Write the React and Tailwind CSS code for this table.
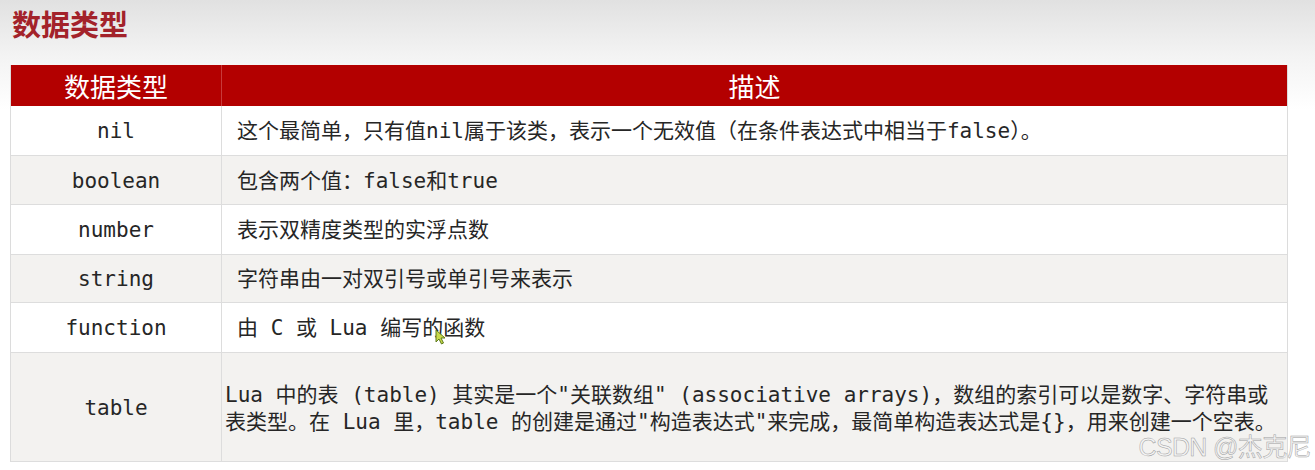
const rows = [
  {
    type: 'nil',
    desc: (
      <>这个最简单，只有值nil属于该类，表示一个无效值（在条件表达式中相当于false）。</>
    ),
    h: 'h-[50px]',
    bg: 'bg-white',
  },
  {
    type: 'boolean',
    desc: <>包含两个值：false和true</>,
    h: 'h-[49px]',
    bg: 'bg-[#f3f2f0]',
  },
  {
    type: 'number',
    desc: <>表示双精度类型的实浮点数</>,
    h: 'h-[50px]',
    bg: 'bg-white',
  },
  {
    type: 'string',
    desc: <>字符串由一对双引号或单引号来表示</>,
    h: 'h-[48px]',
    bg: 'bg-[#f3f2f0]',
  },
  {
    type: 'function',
    desc: <>由 C 或 Lua 编写的函数</>,
    h: 'h-[50px]',
    bg: 'bg-white',
    cursor: true,
  },
]

function Cursor() {
  return (
    <svg
      width="12"
      height="16"
      viewBox="0 0 12 16"
      className="absolute left-[213px] top-[26px]"
    >
      <path d="M1 1 L1 13 L4 10 L6.5 15 L8.5 14 L6 9 L10 9 Z" fill="#c8d94a" stroke="#5c7a1c" strokeWidth="1" />
    </svg>
  )
}

export default function App() {
  const mono = { fontFamily: '"DejaVu Sans Mono", "Noto Sans CJK SC", monospace' }
  return (
    <div
      className="relative w-full h-[470px] overflow-hidden bg-[linear-gradient(to_bottom,#e1e1e1_0px,#f3f3f3_55px,#ffffff_110px)]"
      style={{ fontFamily: '"Noto Sans CJK SC", sans-serif' }}
    >
      <h1 className="absolute left-[12px] top-[1px] text-[29px] font-bold text-[#a3222a] leading-[44px]">
        数据类型
      </h1>

      <div className="pt-[65px] pl-[10px]">
        <div className="w-[1278px] border-l border-r border-[#dcdcdc]">
          {/* 表头 */}
          <div className="grid grid-cols-[211px_1fr] h-[41px] bg-[#b30000] text-white text-[26px] leading-[41px]">
            <div className="text-center border-r border-[#c83a3a]">数据类型</div>
            <div className="text-center">描述</div>
          </div>

          {rows.map((r) => (
            <div
              key={r.type}
              className={`grid grid-cols-[211px_1fr] ${r.h} ${r.bg} border-b border-[#dddddd] text-[21px] text-[#262626]`}
              style={mono}
            >
              <div className="flex items-center justify-center pt-[3px] border-r border-[#dddddd]">{r.type}</div>
              <div className="relative flex items-center pt-[3px] pl-[15px]">
                {r.desc}
                {r.cursor && <Cursor />}
              </div>
            </div>
          ))}

          <div
            className="grid grid-cols-[211px_1fr] h-[109px] bg-[#f3f2f0] border-b border-[#dddddd] text-[21px] text-[#262626]"
            style={mono}
          >
            <div className="flex items-center justify-center pt-[3px] border-r border-[#dddddd]">table</div>
            <div className="flex flex-col justify-center pt-[3px] pl-[3px] leading-[27px]">
              <div>Lua 中的表 (table) 其实是一个"关联数组" (associative arrays)，数组的索引可以是数字、字符串或</div>
              <div>表类型。在 Lua 里，table 的创建是通过"构造表达式"来完成，最简单构造表达式是{'{}'}，用来创建一个空表。</div>
            </div>
          </div>
        </div>
      </div>

      <div
        className="absolute right-[4px] bottom-[4px] text-[25px] text-[#f4f4f4] tracking-tight"
        style={{
          fontFamily: '"Liberation Sans", "Noto Sans CJK SC", sans-serif',
          WebkitTextStroke: '0.5px #a0a0a0',
        }}
      >
        CSDN @杰克尼
      </div>
    </div>
  )
}
